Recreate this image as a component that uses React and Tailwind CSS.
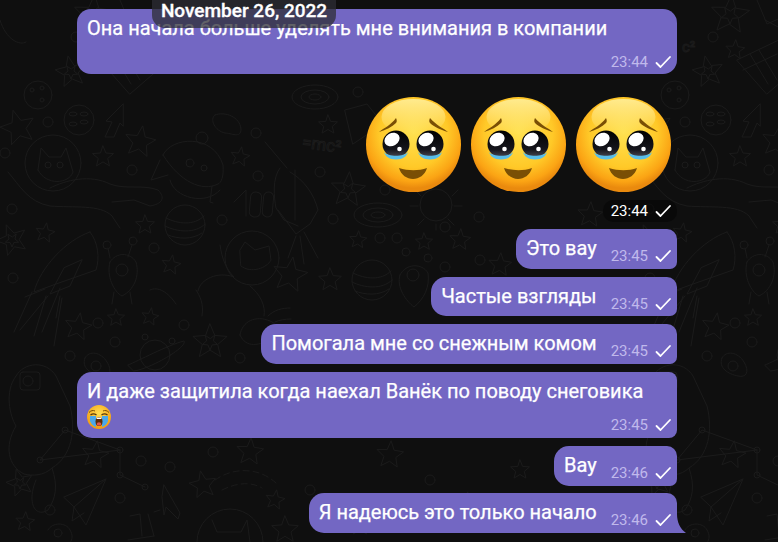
// Telegram dark chat: doodle wallpaper, purple outgoing bubbles, date pill.
const starPath = (cx, cy, r, rot = 0) => {
  let d = "";
  for (let i = 0; i < 10; i++) {
    const a = ((rot + i * 36 - 90) * Math.PI) / 180;
    const rr = i % 2 ? r * 0.45 : r;
    d += (i ? "L" : "M") + (cx + rr * Math.cos(a)).toFixed(1) + " " + (cy + rr * Math.sin(a)).toFixed(1);
  }
  return d + "Z";
};

const STARS = [
  [18, 128, 18, -15], [140, 142, 16, 10], [103, 157, 11, 0], [240, 157, 10, 10], [145, 225, 10, 0],
  [45, 233, 10, 10], [12, 240, 16, -20], [171, 265, 10, 10], [78, 327, 14, 10], [116, 318, 9, 0],
  [150, 317, 9, 10], [210, 342, 18, 0], [95, 455, 14, 10], [203, 485, 14, -10], [250, 452, 14, 5],
  [20, 483, 14, -15], [25, 522, 10, 5], [275, 500, 10, 10], [285, 530, 14, 0], [93, 15, 20, 5],
  [71, 72, 16, -10], [98, 50, 10, 5], [328, 125, 10, 0], [348, 190, 18, 5], [358, 240, 9, 5],
  [424, 242, 9, 0], [460, 240, 11, 5], [330, 280, 12, 0], [290, 275, 18, 10], [500, 265, 12, 5],
  [390, 455, 14, 5], [470, 505, 13, -10], [520, 470, 10, 0], [360, 525, 11, 0], [590, 215, 13, 5],
];
const NESTED = [[12, 240, 7], [71, 72, 7], [348, 190, 8], [210, 342, 8], [20, 483, 6], [93, 15, 9]];
const RINGS = [
  [48, 122], [5, 153], [132, 170], [256, 133], [258, 176], [222, 220], [12, 209], [154, 248], [13, 278],
  [98, 323], [184, 325], [115, 342], [70, 356], [240, 358], [141, 461], [170, 467], [213, 452], [120, 498],
  [50, 510], [76, 37], [358, 92], [320, 172], [333, 219], [385, 190], [479, 217], [380, 238], [397, 238],
  [445, 227], [445, 267], [480, 260], [430, 480], [540, 500], [310, 490],
];

// one wallpaper tile, it repeats every 637px
const Tile = () => (
  <g>
    {STARS.map(([x, y, r, o], i) => <path key={i} d={starPath(x, y, r, o)} />)}
    {NESTED.map(([x, y, r], i) => <path key={i} d={starPath(x, y, r, 36)} />)}
    {RINGS.map(([x, y], i) => <circle key={i} cx={x} cy={y} r="5" />)}

    {/* spotted planet */}
    <circle cx="79" cy="120" r="15" />
    <ellipse cx="73" cy="114" rx="4" ry="2" /><ellipse cx="84" cy="114" rx="4" ry="2" />
    <ellipse cx="73" cy="124" rx="4" ry="2" /><ellipse cx="84" cy="122" rx="4" ry="2" />
    {/* arrow */}
    <path d="M123 104l-17 17 6 1-7 15 9 0 6-14 3 3z" />
    {/* cat in a helmet */}
    <circle cx="53" cy="163" r="28" />
    <path d="M38 170l3-22 8 9h12l5-9 7 24c-4 12-27 14-35-2z" />
    <circle cx="48" cy="165" r="3" /><circle cx="60" cy="165" r="3" />
    <path d="M8 172c12 14 20 30 42 34 24 2 50-2 62 10l8 12M50 188c16-8 40-14 60-4 16 6 32 0 48 6 8 8 4 14-8 16l-16-6-22 2" />
    {/* ufo */}
    <circle cx="202" cy="138" r="6" />
    <path d="M163 155c8-18 50-22 60 10 1 12-2 18-5 19-16 8-38-2-55-29z" />
    <path d="M160 160l-9 20 17-5M212 186l-2 16 3 1" /><path d="M170 180c4 18 36 26 50 10" />
    <circle cx="190" cy="163" r="4" /><circle cx="204" cy="168" r="3" />
    {/* asteroid */}
    <path d="M215 115c10-4 25 2 26 14 0 10-10 4-16 4-10-2-16-14-10-18z" />
    {/* the "100" doodle */}
    <path d="M234 202l12-12v26" />
    <rect x="250" y="192" width="11" height="25" rx="5" transform="rotate(5 255 204)" />
    <rect x="263" y="192" width="10" height="25" rx="5" transform="rotate(5 268 204)" />
    {/* rocket right of the tile */}
    <path d="M280 168c-8 10-6 30-4 40l8 12 14 6M295 170v50" />
    <path d="M265 142l22 26" />
    {/* striped planet */}
    <circle cx="185" cy="225" r="20" />
    <path d="M166 218c12 6 28 8 38-2M165 226c12 6 30 8 40-2M168 235c10 4 24 5 34-2" />
    {/* rocket */}
    <path d="M90 232c-24 8-50 36-56 60l22-8 40-14c4-12 2-28-6-38z" />
    <path d="M64 268l-14 26 20-8 12-26zM32 292l-18 40M46 296l-12 40M60 296l-4 22" />
    {/* alien */}
    <path d="M110 262c6-10 20-10 26 0 4 14-2 28-14 34-8-4-16-20-12-34z" />
    <circle cx="122" cy="270" r="6" /><circle cx="107" cy="245" r="4" /><circle cx="133" cy="241" r="4" />
    <path d="M110 258l-2-10M128 257l4-12M114 292l-2 12M130 292l2 12" />
    {/* second cat */}
    <circle cx="252" cy="258" r="27" />
    <path d="M240 250l5-8 10 8 14-4 2 14c-4 8-20 14-30 6z" />
    <path d="M220 245c2 14 6 24 14 32-16-6-34 2-36 14M250 286c10 8 16 20 14 30" />
    <path d="M150 290c8-4 18 2 26 14M196 290c4 6 8 14 6 26" />
    {/* ringed planet */}
    <circle cx="155" cy="355" r="15" />
    <path d="M128 365c10-4 40-20 56-24 4 6-34 28-50 30z" /><circle cx="145" cy="337" r="3" /><circle cx="172" cy="341" r="3" />
    {/* flaming asteroid */}
    <path d="M240 335c2-14 16-20 30-14 10 4 10 14 2 18-12 6-26 10-32-4z" />
    <path d="M268 316c6-6 14-8 22-8M275 322c4-2 10-3 16-3" />
    {/* rays */}
    <path d="M20 330l28-34M42 332l18-44M54 346l8-48M25 297l20-8" />
    {/* blob with swirl */}
    <path d="M85 358c4-8 16-6 22 4 6 10 2 16-6 14-10-2-20-8-16-18z" /><circle cx="96" cy="366" r="5" />
    {/* astronaut with a camera */}
    <path d="M16 376c8-14 30-16 40 0l14 30c6 24 2 50-18 62 6 18 4 30-4 42-12 8-22-6-12-30M16 376c-12 16-6 40 0 50 -12 20-8 40 8 48 8 2 20 2 28-6" />
    <rect x="20" y="372" width="20" height="18" rx="3" /><circle cx="28" cy="381" r="5" />
    {/* constellation */}
    <circle cx="120" cy="450" r="3" /><circle cx="120" cy="475" r="3" /><circle cx="145" cy="487" r="3" />
    <circle cx="65" cy="430" r="3" /><circle cx="40" cy="460" r="3" />
    <path d="M120 450v25l25 12M120 450l-55-20-25 30 80-10" />
    {/* comet */}
    <path d="M215 480c20-14 46-12 62 4M222 490c16-8 30-8 40-2" strokeDasharray="6 4" />
    {/* paper plane */}
    <path d="M64 497l42-18-20 46-12-18zM74 507l32-28M74 507l-2 14 12-8" />
    {/* arrow 2 */}
    <path d="M164 485l16 28-2 6-12-12-2 8-2-18z" />
    {/* bars */}
    <path d="M130 516l10-2 2 22M148 514l6 22M160 510l-6 2M128 540l26-4" />
    {/* cat face */}
    <circle cx="230" cy="542" r="33" />
    <path d="M212 520l5 12h24l6-12 3 22" />
    <path d="M48 530c4-8 18-8 22 0 6 10-2 18-12 18" /><circle cx="58" cy="533" r="4" />
    {/* top right bits */}
    <path d="M100 60l46-22 14 30-30 26zM113 54l18 30M122 50l18 30M106 70l34-16" />
    <circle cx="38" cy="95" r="14" /><circle cx="32" cy="90" r="2" /><circle cx="42" cy="88" r="2" /><circle cx="42" cy="100" r="2" />
    <path d="M0 20c6 20 20 26 26 22M120 0l10 24 18-8M128 20l30 16" />
    {/* spirals */}
    <ellipse cx="315" cy="97" rx="23" ry="12" /><ellipse cx="315" cy="97" rx="14" ry="7" /><ellipse cx="315" cy="97" rx="6" ry="3" />
    <ellipse cx="378" cy="215" rx="24" ry="12" /><ellipse cx="378" cy="215" rx="15" ry="7" /><ellipse cx="378" cy="215" rx="7" ry="3" />
    {/* sun */}
    <circle cx="436" cy="205" r="16" />
    <path d="M415 190l6 6M458 190l-6 6M410 206h8M462 206h-8M418 225l6-6M454 225l-6-6M436 180v6M436 230v-6" />
    {/* striped planet, alien */}
    <circle cx="372" cy="280" r="20" />
    <path d="M353 273c12 6 28 8 38-2M352 282c12 6 30 8 40-2M355 291c10 4 24 5 34-2" />
    <path d="M400 275c6-12 22-12 28-2 2 14-4 26-14 34-8-6-18-20-14-32z" /><circle cx="413" cy="275" r="6" />
    <circle cx="406" cy="252" r="4" /><circle cx="428" cy="258" r="4" />
    {/* rocket middle */}
    <path d="M290 172c14 8 24 22 28 38l-8 14-14 10-18-24M296 236l-8 22M304 232l14 26M300 236l4 28" />
    <path d="M345 110l22-6 16 20-30 20z" />
  </g>
);

const Wallpaper = () => (
  <svg className="absolute inset-0 h-full w-full" viewBox="0 0 778 542" fill="none" stroke="#1b1b1b" strokeWidth="1" strokeLinejoin="round" strokeLinecap="round">
    <Tile />
    <g transform="translate(637 0)"><Tile /></g>
    <text x="302" y="150" fontSize="17" fontFamily="Roboto, sans-serif" transform="rotate(8 320 145)">=mc²</text>
    <text x="682" y="52" fontSize="15" fontFamily="Roboto, sans-serif">c²</text>
  </svg>
);

const Check = () => (
  <svg width="18" height="14" viewBox="0 0 18 14" fill="none" stroke="#ffffff" strokeWidth="1.8" strokeLinecap="round" strokeLinejoin="round" className="ml-[6px] shrink-0">
    <path d="M2.500 8l4 4L16 2" />
  </svg>
);

const Meta = ({ time, className = "text-[#c0b9ec]" }) => (
  <span className={"flex items-center text-[15px] leading-[16px] " + className}>
    {time}
    <Check />
  </span>
);

const PleadingFace = () => (
  <svg width="96" height="96" viewBox="0 0 96 96" className="shrink-0">
    <defs>
      <radialGradient id="pf-skin" cx="50%" cy="38%" r="58%">
        <stop offset="0%" stopColor="#ffe14f" />
        <stop offset="62%" stopColor="#ffc928" />
        <stop offset="88%" stopColor="#fba414" />
        <stop offset="100%" stopColor="#ea8a0e" />
      </radialGradient>
      <linearGradient id="pf-shine" x1="0" y1="0" x2="0" y2="1">
        <stop offset="0%" stopColor="#fff6b0" stopOpacity="0.75" />
        <stop offset="100%" stopColor="#fff6b0" stopOpacity="0" />
      </linearGradient>
      <linearGradient id="pf-eye" x1="0" y1="0" x2="0" y2="1">
        <stop offset="0%" stopColor="#000000" />
        <stop offset="70%" stopColor="#15151c" />
        <stop offset="100%" stopColor="#4a4a55" />
      </linearGradient>
    </defs>
    <circle cx="47.5" cy="47.5" r="47.5" fill="url(#pf-skin)" />
    <ellipse cx="47.5" cy="20" rx="32" ry="18" fill="url(#pf-shine)" />
    <path d="M13 35c5-4 12-7 17-14 1 2 1 4 0 5-4 4-10 7-17 9z" fill="#7a4f05" />
    <path d="M82 35c-5-4-12-7-18-14-1 2-1 4 0 5 4 4 11 7 18 9z" fill="#7a4f05" />
    {[30, 64].map((cx) => (
      <g key={cx}>
        <circle cx={cx} cy="47" r="13.5" fill="url(#pf-eye)" />
        <path d={`M${cx - 12} 55c4 5 20 5 24 0-1 4-5 7.500-12 7.500s-11-3.500-12-7.500z`} fill="#58bdea" />
        <ellipse cx={cx - 4} cy="42.500" rx="8" ry="6.300" fill="#ffffff" transform={`rotate(-30 ${cx - 4} 42.500)`} />
        <circle cx={cx + 3.500} cy="52" r="2.300" fill="#ffffff" />
      </g>
    ))}
    <path d="M33 71c9 3 20 3 28 0-2 7-8 11-14 11s-12-4-14-11z" fill="#7a4f05" />
  </svg>
);

const CryingFace = () => (
  <svg width="24" height="24" viewBox="0 0 24 24" className="mt-[2px] shrink-0">
    <defs>
      <radialGradient id="cf-skin" cx="50%" cy="35%" r="62%">
        <stop offset="0%" stopColor="#ffdf52" />
        <stop offset="100%" stopColor="#f39c12" />
      </radialGradient>
    </defs>
    <circle cx="12" cy="12" r="12" fill="url(#cf-skin)" />
    <path d="M2 7.500c2-2 4-2.500 6-1.500M22 7.500c-2-2-4-2.500-6-1.500" stroke="#7a4f05" strokeWidth="1" fill="none" />
    <path d="M3.500 10c2-1.500 4-1.500 6 0M14.500 10c2-1.500 4-1.500 6 0" stroke="#5b3a08" strokeWidth="1.300" fill="none" />
    <path d="M3 11h6v11c-3-1-5-3-6-6zM15 11h6v5c-1 3-3 5-6 6z" fill="#4aa8ea" />
    <ellipse cx="12" cy="16.500" rx="3.500" ry="4.500" fill="#5b2c08" />
    <rect x="9.500" y="12.500" width="5" height="1.500" rx="0.700" fill="#ffffff" />
    <ellipse cx="12" cy="19" rx="2.300" ry="1.700" fill="#e0584f" />
  </svg>
);

const TEXT = "text-[20px] leading-[24px] text-white [-webkit-text-stroke:0.25px_white]";

const Bubble = ({ text, time, className = "h-[40px]" }) => (
  <div className={"flex items-start rounded-l-[15px] rounded-tr-[10px] rounded-br-[7px] bg-[#7367c3] pl-[10px] pr-[5px] " + className}>
    <span className={"pt-[7px] " + TEXT}>{text}</span>
    <span className="ml-[14px] pt-[19px]"><Meta time={time} /></span>
  </div>
);

export default function App() {
  return (
    <div className="relative h-[542px] w-[778px] overflow-hidden bg-[#0f0f0f] font-['Roboto',sans-serif]">
      <Wallpaper />

      <div className="relative flex flex-col items-end gap-[8px] pr-[101px] pt-[9px]">
        <div className="flex h-[65px] w-[600px] flex-col justify-between rounded-[14px] bg-[#7367c3] pb-[4px] pl-[10px] pr-[5px] pt-[7px]">
          <p className={TEXT}>Она начала больше уделять мне внимания в компании</p>
          <div className="flex justify-end"><Meta time="23:44" /></div>
        </div>

        <div className="mt-[15px] flex gap-[9px] pr-[5px]">
          <PleadingFace />
          <PleadingFace />
          <PleadingFace />
        </div>

        <div className="-mb-[1px] mt-[-1px] rounded-[10px] bg-black/40 py-[3px] pl-[8px] pr-[5px]">
          <Meta time="23:44" className="text-white" />
        </div>

        <Bubble text="Это вау" time="23:45" />
        <Bubble text="Частые взгляды" time="23:45" className="h-[39px]" />
        <Bubble text="Помогала мне со снежным комом" time="23:45" />

        <div className="flex h-[66px] w-[600px] flex-col rounded-l-[15px] rounded-r-[8px] bg-[#7367c3] pb-[5px] pl-[10px] pr-[5px] pt-[7px]">
          <p className={TEXT}>И даже защитила когда наехал Ванёк по поводу снеговика</p>
          <div className="flex flex-1 items-start justify-between">
            <CryingFace />
            <span className="self-end"><Meta time="23:45" /></span>
          </div>
        </div>

        <Bubble text="Вау" time="23:46" />

        <div className="relative -mt-[1px]">
          <Bubble text="Я надеюсь это только начало" time="23:46" className="h-[40px] rounded-br-none" />
          <svg width="9" height="19" viewBox="0 0 9 19" className="absolute bottom-0 left-full">
            <path d="M0 0c0 8 3 15 9 19H0z" fill="#7367c3" />
          </svg>
        </div>
      </div>

      <div className="absolute left-[152px] top-0 flex h-[28px] w-[184px] items-center justify-center rounded-b-[13px] bg-[#2d2d35]/75 pb-[8px] pt-[2px] text-[19px] font-medium leading-[20px] text-white [-webkit-text-stroke:0.3px_white]">
        November 26, 2022
      </div>
    </div>
  );
}
